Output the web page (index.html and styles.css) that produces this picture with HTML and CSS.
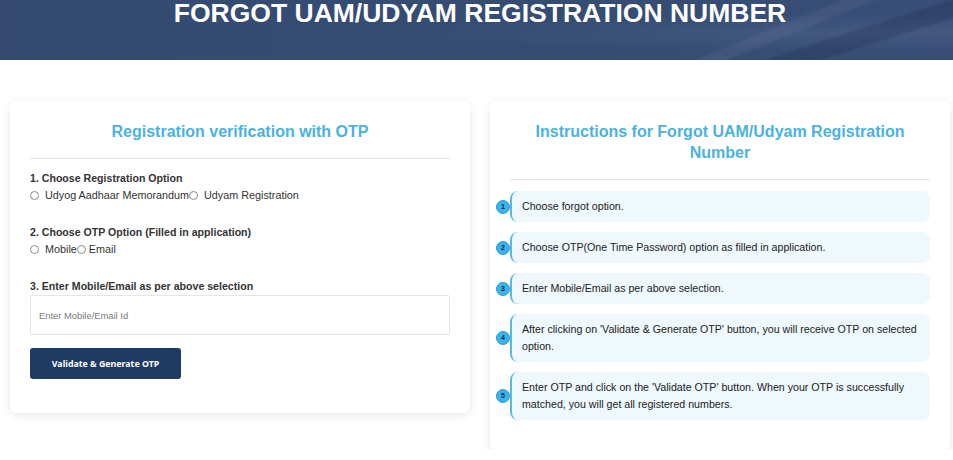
FILE: index.html
```html
<!DOCTYPE html>
<html lang="en">
<head>
<meta charset="utf-8">
<title>Forgot UAM/Udyam Registration Number</title>
<link rel="stylesheet" href="styles.css">
</head>
<body>
<header class="banner">
  <h1 class="banner-title">FORGOT UAM/UDYAM REGISTRATION NUMBER</h1>
</header>
<main class="content">
  <section class="card form-card">
    <h2 class="card-title">Registration verification with OTP</h2>
    <hr class="divider">
    <div class="group">
      <div class="label">1. Choose Registration Option</div>
      <div class="radios">
        <label class="radio"><input type="radio" name="reg"><span>Udyog Aadhaar Memorandum</span></label><label class="radio"><input type="radio" name="reg"><span>Udyam Registration</span></label>
      </div>
    </div>
    <div class="group">
      <div class="label">2. Choose OTP Option (Filled in application)</div>
      <div class="radios">
        <label class="radio"><input type="radio" name="otp"><span>Mobile</span></label><label class="radio tight"><input type="radio" name="otp"><span>Email</span></label>
      </div>
    </div>
    <div class="group last">
      <div class="label">3. Enter Mobile/Email as per above selection</div>
      <input class="text-input" type="text" placeholder="Enter Mobile/Email Id">
    </div>
    <button class="btn" type="button">Validate &amp; Generate OTP</button>
  </section>

  <section class="card info-card">
    <h2 class="card-title">Instructions for Forgot UAM/Udyam Registration Number</h2>
    <hr class="divider">
    <ol class="steps">
      <li class="step"><span class="num">1</span>Choose forgot option.</li>
      <li class="step"><span class="num">2</span>Choose OTP(One Time Password) option as filled in application.</li>
      <li class="step"><span class="num">3</span>Enter Mobile/Email as per above selection.</li>
      <li class="step"><span class="num">4</span>After clicking on 'Validate &amp; Generate OTP' button, you will receive OTP on selected option.</li>
      <li class="step"><span class="num">5</span>Enter OTP and click on the 'Validate OTP' button. When your OTP is successfully matched, you will get all registered numbers.</li>
    </ol>
  </section>
</main>
</body>
</html>
```

FILE: styles.css
```css
* { box-sizing: border-box; }

body {
  margin: 0;
  background: #ffffff;
  font-family: "Liberation Sans", Arial, sans-serif;
  color: #333;
}

.banner {
  height: 60px;
  padding-left: 7px;
  background:
    linear-gradient(158deg, transparent 0 76%, rgba(255,255,255,0.05) 77% 79%, transparent 80%),
    linear-gradient(162deg, transparent 0 83%, rgba(20,35,70,0.22) 84% 88%, transparent 89%),
    radial-gradient(ellipse at 93% 55%, rgba(110,130,165,0.22), transparent 40%),
    linear-gradient(90deg, #344a71 0%, #354c73 60%, #384e76 100%);
  text-align: center;
}

.banner-title {
  margin: 0;
  font-size: 26.5px;
  line-height: 1;
  font-weight: bold;
  color: #ffffff;
}

.content {
  display: grid;
  grid-template-columns: 460px 460px;
  column-gap: 20px;
  align-items: start;
  padding: 41px 0 0 10px;
}

.card {
  background: #fff;
  border-radius: 6px;
  box-shadow: 0 2px 10px rgba(0,0,0,0.10);
  padding: 20px 20px 34px;
}

.info-card { padding-bottom: 30px; }

.card-title {
  margin: 0;
  text-align: center;
  font-size: 16px;
  line-height: 21px;
  font-weight: bold;
  color: #4bb2e0;
}

.divider {
  border: 0;
  border-top: 1px solid #e4e4e4;
  margin: 16px 0 11px;
}

.group { margin-bottom: 21px; }
.group.last { margin-bottom: 13px; }

.label {
  font-size: 10.6px;
  line-height: 17px;
  font-weight: bold;
  color: #333;
}

.radios {
  display: flex;
  font-size: 10.8px;
  line-height: 16px;
  color: #333;
}

.radio {
  display: inline-flex;
  align-items: center;
}

.radio input {
  appearance: none;
  -webkit-appearance: none;
  width: 9px;
  height: 9px;
  margin: 0 6px 0 0;
  border: 1px solid #8a8a8a;
  border-radius: 50%;
  background: #fff;
}

.radio.tight input { margin-right: 3px; }

.text-input {
  display: block;
  width: 100%;
  height: 40px;
  border: 1px solid #e6e6e6;
  border-radius: 2px;
  padding: 0 8px;
  font-family: "Liberation Sans", Arial, sans-serif;
  font-size: 9.4px;
  color: #555;
  outline: none;
}

.text-input::placeholder { color: #7a7a7a; }

.btn {
  display: block;
  width: 151px;
  height: 31px;
  border: 0;
  border-radius: 3px;
  background: #1f3a63;
  color: #fff;
  font-family: "Noto Sans", sans-serif;
  font-weight: bold;
  font-size: 8.8px;
  padding: 0;
}

.steps {
  list-style: none;
  margin: 0;
  padding: 0;
  display: flex;
  flex-direction: column;
  gap: 10px;
}

.step {
  position: relative;
  background: #eef8fd;
  border-left: 2px solid #5ab7e3;
  border-radius: 8px;
  padding: 7px 12px 7px 10px;
  font-size: 10.65px;
  line-height: 17px;
  color: #222;
}

.num {
  position: absolute;
  left: -16px;
  top: 50%;
  transform: translateY(-50%);
  width: 14px;
  height: 14px;
  border-radius: 50%;
  background: #3ab2ea;
  border: 1px solid #2a9bd2;
  color: #13284a;
  font-size: 7px;
  font-weight: bold;
  line-height: 12px;
  text-align: center;
}
```
